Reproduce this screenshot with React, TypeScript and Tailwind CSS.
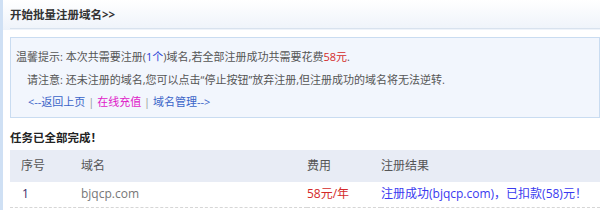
const font = { fontFamily: '"Open Sans", "Noto Sans CJK SC", sans-serif' };

export default function App() {
  return (
    <div
      className="h-[210px] w-[600px] overflow-hidden border-l-[3px] border-[#cfe0f4] bg-white text-[11px] text-[#555]"
      style={font}
    >
      {/* Heading */}
      <div className="h-[30px] bg-gradient-to-b from-white to-[#eef3fa] pl-[7px]">
        <div className="flex h-[29px] items-center border-b border-[#d8e2ee] pt-[1px] text-[11.5px] font-bold text-[#333]">
          开始批量注册域名&gt;&gt;
        </div>
      </div>

      <div className="pl-[7px]">
        {/* Tips */}
        <div className="mt-[7px] h-[81px] border border-[#c9dcf1] bg-[#f2f6fd] pt-[8px] leading-[22.5px]">
          <div className="pl-[5px]">
            温馨提示: 本次共需要注册(<span className="text-[#2a3fd6]">1个</span>)域名,若全部注册成功共需要花费
            <span className="text-[#d42a2a]">58元</span>.
          </div>
          <div className="pl-[16px]">
            请注意: 还未注册的域名,您可以点击“停止按钮”放弃注册,但注册成功的域名将无法逆转.
          </div>
          <div className="pl-[17px] text-[#3a64c8]">
            &lt;--返回上页 <span className="text-[#999]">|</span>{" "}
            <span className="text-[#e020c8]">在线充值</span>{" "}
            <span className="text-[#999]">|</span> 域名管理--&gt;
          </div>
        </div>

        {/* Result */}
        <div className="mt-[11px] text-[11.5px] font-bold leading-[18px] text-[#222]">任务已全部完成！</div>
        <table className="mt-[3px] w-full border-collapse text-left text-[12px]">
          <thead>
            <tr className="h-[32px] bg-[#e8ecf5] text-[#555]">
              <th className="w-[71px] pl-[11px] font-normal">序号</th>
              <th className="w-[226px] font-normal">域名</th>
              <th className="w-[74px] font-normal">费用</th>
              <th className="font-normal">注册结果</th>
            </tr>
          </thead>
          <tbody>
            <tr className="h-[25px] border-b border-dashed border-[#d6d6d6]">
              <td className="pl-[12px] text-[#3a2a6a]">1</td>
              <td className="text-[#777]">bjqcp.com</td>
              <td className="text-[#d42a2a]">58元/年</td>
              <td className="text-[#3a3af0]">注册成功(bjqcp.com)，已扣款(58)元！</td>
            </tr>
          </tbody>
        </table>
      </div>
    </div>
  );
}
